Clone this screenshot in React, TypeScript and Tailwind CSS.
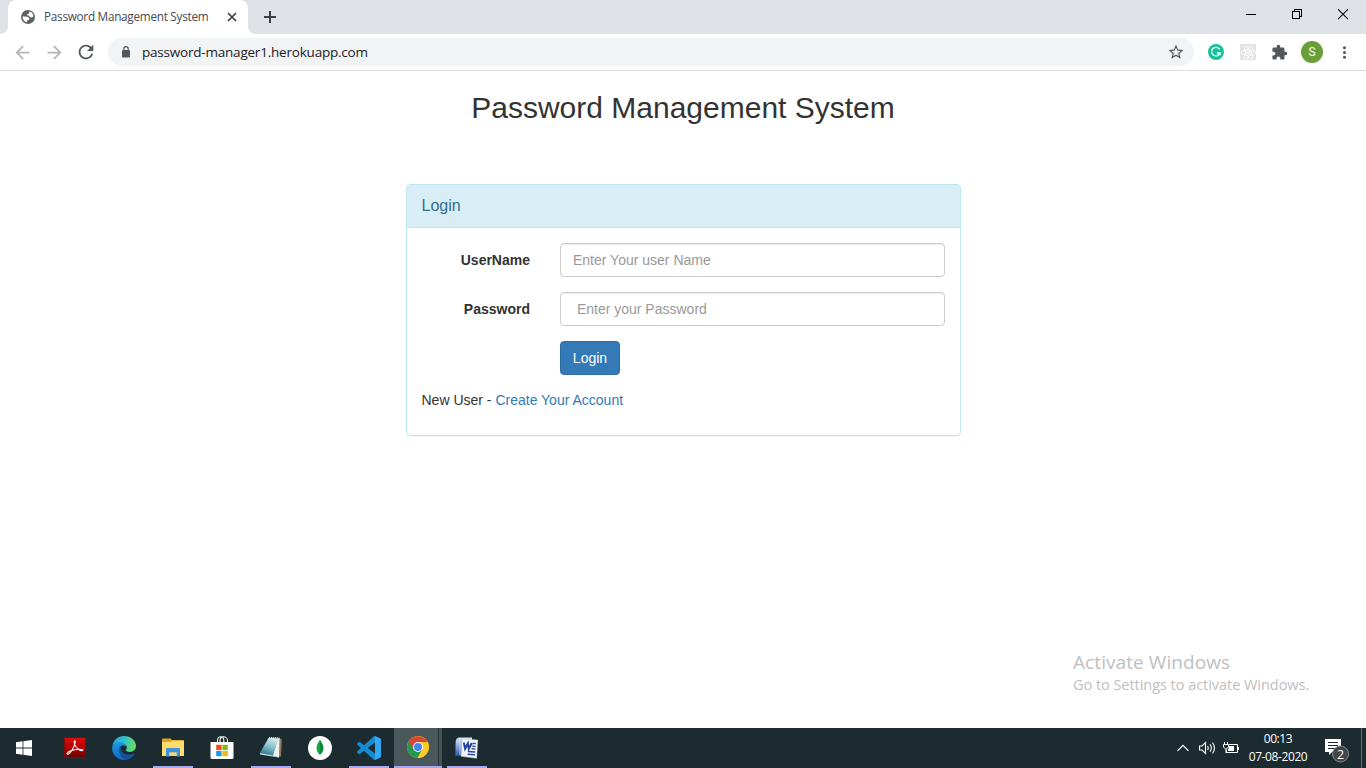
import React from "react";
import {
  MdArrowBack,
  MdArrowForward,
  MdExtension,
  MdMoreVert,
  MdRefresh,
  MdStarBorder,
} from "react-icons/md";
import { SiReact } from "react-icons/si";

function GlobeIcon() {
  return (
    <svg width="14" height="14" viewBox="0 0 14 14">
      <circle cx="7" cy="7" r="7" fill="#5f6368" />
      <path d="M8.3 1.6C10.6 2 12.3 3.9 12.4 6.4L10.6 7.4 8.7 7 8.3 5.7 6.3 5.3 6.2 4.3 8 3.5Z" fill="#fff" />
      <path d="M1.6 6.6 4 6.6 6.9 7.1 8.4 8.3 8 9.8 6.4 10.2 5.8 12.4C3.2 11.8 1.6 9.7 1.6 6.6Z" fill="#fff" />
    </svg>
  );
}

function LockIcon() {
  return (
    <svg width="14" height="14" viewBox="0 0 14 14" fill="none">
      <rect x="3" y="5" width="8" height="7.5" rx="1" fill="#54585d" />
      <path d="M4.8 5.5V3.8A2.2 2.2 0 0 1 9.2 3.8V5.5" stroke="#54585d" strokeWidth="1.2" />
    </svg>
  );
}

function TabStrip() {
  return (
    <div className="flex h-[34px] shrink-0 bg-[#dee1e6]">
      <div className="flex w-2 items-end bg-white">
        <div className="h-full w-2 rounded-br-lg bg-[#dee1e6]" />
      </div>
      <div className="w-60 bg-[#dee1e6]">
        <div className="flex h-full items-center rounded-t-lg bg-white pl-[13px]">
          <GlobeIcon />
          <span className="ml-[9px] w-[170px] text-[11.75px] tracking-[-0.27px] whitespace-nowrap text-[#45494d]">
            Password Management System
          </span>
          <svg className="ml-[13px]" width="10" height="10" viewBox="0 0 10 10" stroke="#3c4043" strokeWidth="1.7">
            <path d="M1 1 9 9M9 1 1 9" />
          </svg>
        </div>
      </div>
      <div className="w-2 bg-white">
        <div className="h-full w-2 rounded-bl-lg bg-[#dee1e6]" />
      </div>
      <svg className="mt-[11px] ml-[8px]" width="12" height="12" viewBox="0 0 12 12" stroke="#3c4043" strokeWidth="2">
        <path d="M6 0V12M0 6H12" />
      </svg>
      <div className="ml-auto flex gap-[36px] pt-[9px] pr-[18px]">
        <svg width="10" height="11" viewBox="0 0 10 11" stroke="#000" shapeRendering="crispEdges">
          <path d="M0 5.5H10" />
        </svg>
        <svg width="10" height="11" viewBox="0 0 10 11" fill="none" stroke="#000" shapeRendering="crispEdges">
          <path d="M.5 2.5H7.5V9.5H.5ZM2.5 2V.5H9.5V7.5H8" />
        </svg>
        <svg width="10" height="11" viewBox="0 0 10 11" stroke="#000" strokeWidth="1.1">
          <path d="M0 .2 10 10.2M10 .2 0 10.2" />
        </svg>
      </div>
    </div>
  );
}

function Toolbar() {
  return (
    <div className="flex h-[37px] shrink-0 items-center border-b border-[#d9dadc] bg-white pl-[11.5px]">
      <MdArrowBack size={21} color="#b4b6b8" />
      <MdArrowForward className="ml-[11px]" size={21} color="#b4b6b8" />
      <MdRefresh className="ml-[10.5px]" size={22} color="#54585d" />
      <div className="ml-[11px] flex h-7 w-[1086px] items-center rounded-full bg-[#f1f3f4] pl-[11px]">
        <LockIcon />
        <span className="ml-[9px] text-[13.5px] tracking-[-0.21px] whitespace-nowrap text-[#202124]">
          password-manager1.herokuapp.com
        </span>
        <MdStarBorder className="mr-[9px] ml-auto" size={18} color="#54585d" />
      </div>
      <svg className="ml-[14px]" width="16" height="16" viewBox="0 0 16 16" fill="none">
        <circle cx="8" cy="8" r="8" fill="#15c39a" />
        <path d="M11.6 5.4A4.3 4.3 0 1 0 12 9H8.9M12 9V11.3" stroke="#fff" strokeWidth="1.3" />
      </svg>
      <div className="ml-4 flex h-4 w-4 items-center justify-center bg-[#e3e3e3]">
        <SiReact size={15} color="#ffffff" />
      </div>
      <MdExtension className="ml-[15px]" size={17} color="#54585d" />
      <div className="ml-[13px] flex h-[22px] w-[22px] items-center justify-center rounded-full bg-[#689f38] font-[Roboto] text-xs text-white">
        S
      </div>
      <MdMoreVert className="ml-[12px]" size={19} color="#54585d" />
    </div>
  );
}

type FieldProps = { label: string; placeholder: string; type: string };

function Field({ label, placeholder, type }: FieldProps) {
  return (
    <label className="mb-[15px] flex h-[34px]">
      <span className="w-[123px] pt-[7px] text-right leading-5 font-bold">{label}</span>
      <input
        type={type}
        placeholder={placeholder}
        className="ml-[30px] w-[385px] rounded border border-[#ccc] bg-white px-3 py-1.5 leading-5 shadow-[inset_0_1px_1px_rgba(0,0,0,0.075)] placeholder:text-[#999]"
      />
    </label>
  );
}

function LoginPage() {
  return (
    <main className="flex min-h-0 flex-1 flex-col bg-white font-['Liberation_Sans',Arial,sans-serif] text-sm text-[#333]">
      <h1 className="mt-5 text-center text-[30px] leading-[33px] font-normal">Password Management System</h1>
      <section className="mt-[60px] ml-[406px] h-[252px] w-[555px] rounded border border-[#bce8f1] shadow-[0_1px_1px_rgba(0,0,0,0.05)]">
        <h2 className="h-[43px] rounded-t-[3px] border-b border-[#bce8f1] bg-[#d9edf7] px-[14.5px] pt-[12px] text-base leading-[18px] text-[#31708f]">
          Login
        </h2>
        <form className="pt-[15px]">
          <Field label="UserName" placeholder="Enter Your user Name" type="text" />
          <Field label="Password" placeholder=" Enter your Password" type="password" />
          <button
            type="button"
            className="ml-[153px] block h-[34px] w-[60px] rounded border border-[#2e6da4] bg-[#337ab7] leading-5 text-white"
          >
            Login
          </button>
          <p className="mt-[15px] ml-[14.5px] leading-5">
            New User -{" "}
            <a href="#" className="text-[#337ab7]">
              Create Your Account
            </a>
          </p>
        </form>
      </section>
      <div className="mt-auto mb-[33px] ml-[1073px] font-['Open_Sans',sans-serif] text-[#c0c0c0]">
        <div className="text-[19px] leading-[25px] tracking-[0.08px]">Activate Windows</div>
        <div className="text-[14.5px] leading-5 tracking-[-0.04px] whitespace-nowrap">Go to Settings to activate Windows.</div>
      </div>
    </main>
  );
}

function WindowsIcon() {
  return (
    <svg width="16" height="16" viewBox="0 0 16 16" fill="#fff">
      <path d="M0 2.3 6.6 1.3V7.5H0ZM7.4 1.2 16 0V7.5H7.4ZM0 8.4H6.6V14.7L0 13.7ZM7.4 8.4H16V16L7.4 14.8Z" />
    </svg>
  );
}

function AcrobatIcon() {
  return (
    <svg width="22" height="22" viewBox="0 0 22 22" fill="none">
      <defs>
        <linearGradient id="pdf" x2="0" y2="1">
          <stop stopColor="#df0a0a" />
          <stop offset=".5" stopColor="#b80000" />
          <stop offset="1" stopColor="#650000" />
        </linearGradient>
      </defs>
      <rect x=".5" y=".5" width="21" height="20" fill="url(#pdf)" stroke="#7d0d0d" />
      <path
        d="M3.2 16.6C3.2 14.6 9.2 12.6 15 12.3 18.6 12.1 19.8 13.3 18 13.8 15.3 14 11.3 10.5 10.3 6 9.8 3.4 11.5 3 11.2 5.4 10.6 9.5 6.3 16.8 3.9 17.2 3.4 17.3 3.2 17 3.2 16.6Z"
        stroke="#fff"
        strokeWidth="1.1"
      />
    </svg>
  );
}

function EdgeIcon() {
  return (
    <svg width="24" height="24" viewBox="0 0 24 24">
      <defs>
        <linearGradient id="edgeTop" x1="0" y1=".3" x2="1" y2=".5">
          <stop stopColor="#229fe0" />
          <stop offset=".5" stopColor="#35c1c8" />
          <stop offset="1" stopColor="#68dd58" />
        </linearGradient>
        <linearGradient id="edgeLeft" x2="0" y2="1">
          <stop stopColor="#1a9be2" />
          <stop offset="1" stopColor="#1265c1" />
        </linearGradient>
      </defs>
      <path d="M.4 10C1.2 4 6 0 12 0 19 0 24 4.7 24 10.1 24 13.7 21.1 16 17.8 16 15 16 13.8 14.9 13.8 14.1 13.8 13.5 14.8 13.3 14.8 11.5 14.8 9.4 12 7.1 8.4 7.1 4.7 7.1 1.4 8.4.4 10Z" fill="url(#edgeTop)" />
      <path d="M.1 12.6C.1 8.5 4 5.9 8.1 6 11.8 6.1 14.4 8.3 14.8 11.2 14 9.7 11.4 9 9.8 9.5 7.1 11.1 6.9 15.8 10.5 18.8 13.6 21.3 18.3 20.6 22.2 18.1 20.2 21.7 16.5 24 12 24 5.2 24 .1 18.5.1 12.6Z" fill="url(#edgeLeft)" />
      <path d="M9.8 9.5C6.6 10.6 6 15.1 7.8 18.6 9 21.2 12 23.2 14.5 23.5 18 22.8 20.8 20.7 22.4 18 22.7 17.4 22.3 17.2 21.8 17.5 17.7 19.5 12.4 18.6 10.1 15.7 8.5 13.7 8.7 11 9.8 9.5Z" fill="#13529e" />
    </svg>
  );
}

function ExplorerIcon() {
  return (
    <svg width="22" height="20" viewBox="0 0 22 20">
      <path d="M0 1.3Q0 .5.8.5H8.6L10 2H21Q22 2 22 3V18H0Z" fill="#dda321" />
      <path d="M0 4H8.5L10.3 2.7H22V18H0Z" fill="#ffdc70" />
      <path d="M7 14H15V18H7Z" fill="#f2d279" />
      <path d="M4 17.5V11.3Q4 10 5.3 10H16.7Q18 10 18 11.3V18.5H14.8V14.2H7.2V18.5H4Z" fill="#3b91db" />
    </svg>
  );
}

function StoreIcon() {
  return (
    <svg width="24" height="24" viewBox="0 0 24 24" fill="none">
      <path d="M7.5 7V4.7C7.5 1.8 9.2.8 11 .8 12.7.8 13.8 2.2 13.8 4.5V6M10.1 6V4.5C10.1 2.2 11.3.8 13.5.8 15.5.8 17.5 2.2 17.5 4.6V7" stroke="#fff" strokeWidth="1.1" />
      <path d="M.5 6H23.5V21.5Q23.5 23 22 23H2Q.5 23 .5 21.5Z" fill="#fff" />
      <path d="M6.2 8.8H11.6V14.1H6.2Z" fill="#ef4e1c" />
      <path d="M12.4 8.8H17.8V14.1H12.4Z" fill="#78bd13" />
      <path d="M6.2 15H11.6V20.2H6.2Z" fill="#109fe8" />
      <path d="M12.4 15H17.8V20.2H12.4Z" fill="#f9b717" />
    </svg>
  );
}

function NotepadIcon() {
  return (
    <svg width="24" height="23" viewBox="0 0 24 23">
      <defs>
        <linearGradient id="note" x1=".7" x2=".3" y2="1">
          <stop stopColor="#d5eff1" />
          <stop offset=".5" stopColor="#82bcc8" />
          <stop offset="1" stopColor="#23778d" />
        </linearGradient>
      </defs>
      <path d="M19.5 2.2 22.8 3 22 20.3 18 21.8Z" fill="#8d795c" />
      <path d="M19.3 2.2 20.5 2.6 20 21.4 13.5 19.6Z" fill="#eef1ef" />
      <path d="M9.6 1.8 19.5 2.4 14 19.6.9 17.1Z" fill="url(#note)" />
      <path d="M.9 17.1 14 19.4 20 21.5 1.2 18.5Z" fill="#d9e7e7" />
      <path d="M10.5 1V2.6M12.4 1V2.6M14.3 1V2.9M16.2 1V2.9M18.1 1.2V3.1M20 1.5V3.4" stroke="#e7eff0" strokeWidth="1" />
    </svg>
  );
}

function MongoIcon() {
  return (
    <svg width="24" height="24" viewBox="0 0 24 24">
      <circle cx="12" cy="12" r="12" fill="#fff" />
      <path d="M12 3.4C13.1 6 15.5 8.2 15.5 12 15.5 15.2 13.9 17.3 12.3 18.5L12 20.5Z" fill="#0e8a3c" />
      <path d="M12 3.4C10.9 6 8.5 8.2 8.5 12 8.5 15.2 10.1 17.3 11.7 18.5L12 20.5Z" fill="#14a54a" />
    </svg>
  );
}

function CodeIcon() {
  return (
    <svg width="24" height="24" viewBox="0 0 24 24">
      <path
        fill="#168bd2"
        d="M23.15 2.587L18.21.21a1.494 1.494 0 0 0-1.705.29l-9.46 8.63-4.12-3.128a.999.999 0 0 0-1.276.057L.327 7.261A1 1 0 0 0 .326 8.74L3.899 12 .326 15.26a1 1 0 0 0 .001 1.479L1.65 17.94a.999.999 0 0 0 1.276.057l4.12-3.128 9.46 8.63a1.492 1.492 0 0 0 1.704.29l4.942-2.377A1.5 1.5 0 0 0 24 20.06V3.939a1.5 1.5 0 0 0-.85-1.352zm-5.146 14.861L10.826 12l7.178-5.448v10.896z"
      />
      <path fill="#32a8f2" d="M18 .1 23.15 2.587A1.5 1.5 0 0 1 24 3.939V20.06a1.5 1.5 0 0 1-.85 1.35L18 23.9Z" />
    </svg>
  );
}

function ChromeIcon() {
  return (
    <svg width="22" height="22" viewBox="0 0 22 22">
      <circle cx="11" cy="11" r="11" fill="#fbc116" />
      <path d="M11 11 1.5 5.5A11 11 0 0 0 10.5 22L15.3 13.5Z" fill="#219b50" />
      <path d="M1.5 5.5A11 11 0 0 1 20.6 6H11L6.7 13.5Z" fill="#db4437" />
      <path d="M20.6 6H11V11L15.4 13.5 10.5 22A11 11 0 0 0 20.6 6Z" fill="#ffca28" />
      <circle cx="11" cy="11" r="5" fill="#fff" />
      <circle cx="11" cy="11" r="4" fill="#4285f4" />
    </svg>
  );
}

function WordIcon() {
  return (
    <svg width="24" height="22" viewBox="0 0 24 22">
      <defs>
        <linearGradient id="word" x2="0" y2="1">
          <stop stopColor="#dde6f7" />
          <stop offset=".5" stopColor="#86a3d8" />
          <stop offset="1" stopColor="#244da2" />
        </linearGradient>
      </defs>
      <path d="M3.7.5H17V18.5L.3 19.3.7 4Q1 1 3.7.5Z" fill="url(#word)" />
      <path d="M5 1.8V18" stroke="#dbe5f8" strokeWidth=".7" />
      <path d="M7.5 2 22.8 3.1 21.6 21.2 6.2 19.3Z" fill="#f5f7fd" stroke="#cbd6ee" strokeWidth=".5" />
      <path d="M8.9 5.6 10.1 11.6 12.9 6.4 13.8 11.8 16.9 6" fill="none" stroke="#24479a" strokeWidth="2.1" />
      <path d="M17.5 6.4 20.8 6.6M17.2 9.2 20.6 9.4M16.6 11.8 20.4 12" stroke="#3659a9" strokeWidth="1.5" />
      <path d="M12.8 14.5 20.2 15M12.6 17.2 20 17.8" stroke="#25499c" strokeWidth="1.6" />
    </svg>
  );
}

type TaskProps = { children: React.ReactNode; running?: boolean };

function Task({ children, running = false }: TaskProps) {
  return (
    <div className="flex h-10 w-[49px] shrink-0 flex-col items-center justify-between">
      <div className="flex h-[38px] items-center pt-[1px]">{children}</div>
      <div className={running ? "h-0.5 w-10 bg-[#aaa7f0]" : "h-0.5 w-10"} />
    </div>
  );
}

function Tray() {
  return (
    <div className="ml-auto flex h-10 items-center text-white">
      <svg width="12" height="8" viewBox="0 0 12 8" fill="none" stroke="#fff" strokeWidth="1.2">
        <path d="M.5 6.8 6 1.3 11.5 6.8" />
      </svg>
      <svg className="ml-[10px]" width="18" height="14" viewBox="0 0 18 14" fill="none" stroke="#fff" strokeWidth="1.1">
        <path d="M.5 5H3L6.5 1.5V12.5L3 9H.5Z" />
        <path d="M8.5 5Q10 7 8.5 9M11 3.3Q13.7 7 11 10.7M13.5 1.5Q17.5 7 13.5 12.5" />
      </svg>
      <svg className="ml-[6px]" width="17" height="12" viewBox="0 0 17 12" fill="none" stroke="#fff">
        <path d="M6 2.5H14.5V10.5H3.5V8M15.5 5V8" />
        <path d="M1.5 0V2M4.5 0V2M.5 2.5H5.5V5L3.5 7H2.5L.5 5ZM3 7V11" />
        <path d="M6 4H11V9H5V7L6 6Z" fill="#fff" stroke="none" />
      </svg>
      <div className="ml-[8px] w-[60px] text-center font-['Open_Sans',sans-serif] text-xs leading-[18px] tracking-[-0.4px] whitespace-nowrap">
        <div>00:13</div>
        <div>07-08-2020</div>
      </div>
      <svg className="mt-[6px] ml-[17px]" width="26" height="24" viewBox="0 0 26 24">
        <path d="M0 0H16V13H7L4 16V13H0Z" fill="#fff" />
        <path d="M3 3.5H13M3 6.5H13M3 9.5H10" stroke="#20292e" />
        <circle cx="15.5" cy="15" r="8" fill="#414547" stroke="#858b8d" />
        <text x="15.5" y="19.5" textAnchor="middle" fill="#fff" fontFamily="Open Sans" fontSize="12.5">
          2
        </text>
      </svg>
      <div className="ml-[10px] h-10 w-px bg-[#66737a]" />
      <div className="w-1" />
    </div>
  );
}

function Taskbar() {
  return (
    <footer className="flex h-10 shrink-0 bg-[#1b2b30]">
      <div className="mr-[2px] flex w-12 items-center justify-center">
        <WindowsIcon />
      </div>
      <Task><AcrobatIcon /></Task>
      <Task><EdgeIcon /></Task>
      <Task running><ExplorerIcon /></Task>
      <Task><StoreIcon /></Task>
      <Task running><NotepadIcon /></Task>
      <Task><MongoIcon /></Task>
      <Task running><CodeIcon /></Task>
      <div className="ml-[1px] flex h-10 w-12 flex-col border-b-2 border-[#aaa7f0]">
        <div className="flex h-[38px]">
          <div className="flex w-11 items-center justify-center bg-[#4b585b] pl-[4px]">
            <ChromeIcon />
          </div>
          <div className="w-px bg-[#263438]" />
          <div className="w-[3px] bg-[#465356]" />
        </div>
      </div>
      <Task running><WordIcon /></Task>
      <Tray />
    </footer>
  );
}

export default function App() {
  return (
    <div className="flex h-[768px] w-[1366px] flex-col overflow-hidden bg-white font-['Open_Sans',sans-serif]">
      <TabStrip />
      <Toolbar />
      <LoginPage />
      <Taskbar />
    </div>
  );
}
